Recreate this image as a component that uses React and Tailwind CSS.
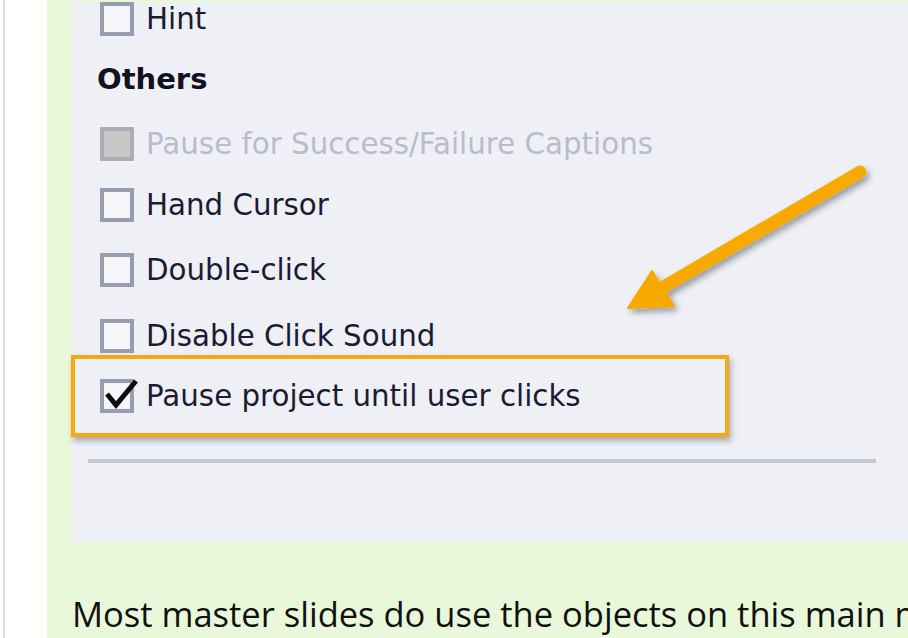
import React from 'react';

const Box = ({ checked, disabled }) => (
    <div
        className={`relative shrink-0 size-[34px] border-[4px] ${
            disabled ? 'border-[#acadb6] bg-[#c8c8c9]' : 'border-[#979cb0] bg-[#f6f6f9]'
        }`}
    >
        {checked && (
            <svg className="absolute left-[-4px] top-[-4px] overflow-visible" width="34" height="34" viewBox="0 0 34 34">
                <path d="M7 15 L16 26 L36 2" fill="none" stroke="#0b0b10" strokeWidth="5" strokeLinejoin="miter" />
            </svg>
        )}
    </div>
);

const Option = ({ label, checked, disabled, className = '' }) => (
    <div className={`flex h-[34px] items-center gap-3 ${className}`}>
        <Box checked={checked} disabled={disabled} />
        <span className={`whitespace-nowrap ${disabled ? 'text-[#b9bccb]' : 'text-[#1b1b33]'}`}>{label}</span>
    </div>
);

// orange call-out arrow laid over the panel
const Arrow = () => (
    <svg className="pointer-events-none absolute left-0 top-0" width="908" height="638" viewBox="0 0 908 638">
        <defs>
            <filter id="sh" x="-20%" y="-20%" width="140%" height="140%">
                <feDropShadow dx="3" dy="4" stdDeviation="3" floodColor="#000" floodOpacity="0.35" />
            </filter>
        </defs>
        <g filter="url(#sh)" fill="#f7a900" stroke="#f7a900">
            <line x1="860" y1="172" x2="660" y2="289" strokeWidth="13" strokeLinecap="round" />
            <polygon points="628,308 652,271 674,306" strokeWidth="2" strokeLinejoin="round" />
        </g>
    </svg>
);

export default function App() {
    return (
        <div className="relative flex h-[638px] w-[908px] overflow-hidden bg-white">
            <div className="w-[47px] shrink-0 pl-[3px]">
                <div className="h-full w-[2px] bg-[#dadada]" />
            </div>

            <div className="min-w-0 flex-1 overflow-hidden bg-[#eaf8da] pl-[25px]">
                <div className="h-[540px] bg-[#eff0f6] text-[29.3px] leading-[34px] [font-family:'DejaVu_Sans',sans-serif]">
                    <Option label="Hint" className="ml-[28px] mt-[2px]" />
                    <div className="ml-[25px] mt-[26px] h-[34px] text-[29px] font-bold text-[#111122]">Others</div>
                    <Option label="Pause for Success/Failure Captions" disabled className="ml-[28px] mt-[31px]" />
                    <Option label="Hand Cursor" className="ml-[28px] mt-[27px]" />
                    <Option label="Double-click" className="ml-[28px] mt-[31px]" />
                    <Option label="Disable Click Sound" className="ml-[28px] mt-[32px]" />

                    <div className="ml-[-1px] mt-[2px] flex h-[82px] w-[658px] items-center border-[4px] border-[#f6a90f] pl-[25px] shadow-[2px_4px_6px_rgba(0,0,0,0.3)]">
                        <Option label="Pause project until user clicks" checked />
                    </div>

                    <div className="ml-[16px] mt-[22px] h-[4px] w-[788px] bg-[#c4c8d1]" />
                </div>

                <p className="mt-[55px] whitespace-nowrap text-[34.5px] leading-[34px] text-[#111111] [font-family:'Open_Sans',sans-serif]">
                    Most master slides do use the objects on this main master slide.
                </p>
            </div>

            <Arrow />
        </div>
    );
}
